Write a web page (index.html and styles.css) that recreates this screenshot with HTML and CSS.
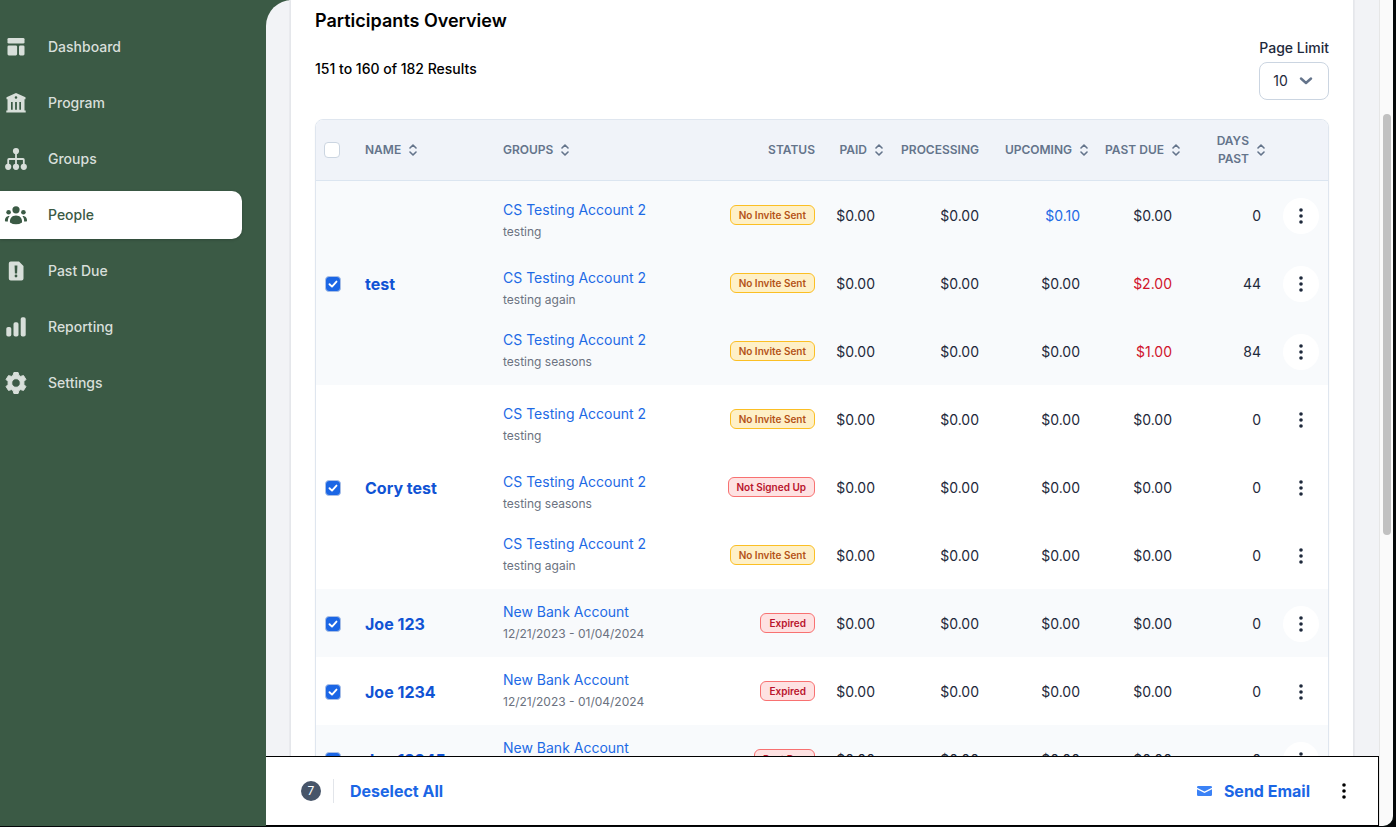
FILE: index.html
```html
<!DOCTYPE html>
<html lang="en">
<head>
<meta charset="utf-8">
<title>Participants Overview</title>
<link rel="stylesheet" href="styles.css">
</head>
<body>
<svg class="sprite" aria-hidden="true">
  <symbol id="sort" viewBox="0 0 8 12"><path d="M1 4 4 1l3 3M1 8l3 3 3-3" fill="none" stroke="currentColor" stroke-width="1.6" stroke-linecap="round" stroke-linejoin="round"/></symbol>
  <symbol id="dots" viewBox="0 0 4 16"><circle cx="2" cy="2" r="1.8"/><circle cx="2" cy="8" r="1.8"/><circle cx="2" cy="14" r="1.8"/></symbol>
</svg>
<div class="app">
  <nav class="sidebar" aria-label="Main">
    <a class="nav-item" href="#"><svg viewBox="0 0 24 24"><rect x="3.5" y="3" width="17" height="5.6" rx="1.3"/><rect x="3.5" y="10.4" width="9.6" height="10" rx="1.3"/><rect x="15" y="10.4" width="5.5" height="10" rx="1.3"/></svg>Dashboard</a>
    <a class="nav-item" href="#"><svg viewBox="0 0 24 24"><path fill-rule="evenodd" d="M12 2 21.5 6.3v1.9h-1V19.6h1.2V21.5H2.3v-1.9h1.2V8.2h-1V6.3zM12 5.2a1.3 1.3 0 1 0 0 2.6 1.3 1.3 0 0 0 0-2.6M7 11v7.8h1.7V11zm4.1 0v7.8h1.8V11zm4.2 0v7.8H17V11z"/></svg>Program</a>
    <a class="nav-item" href="#"><svg viewBox="0 0 24 24"><circle cx="12" cy="4" r="3.1"/><circle cx="4.2" cy="19.8" r="3.1"/><circle cx="12" cy="19.8" r="3.1"/><circle cx="19.8" cy="19.8" r="3.1"/><path d="M12 6v12M4.2 17v-4.2q0-.8.8-.8h14q.8 0 .8.8V17" fill="none" stroke="currentColor" stroke-width="1.8"/></svg>Groups</a>
    <a class="nav-item active" href="#" aria-current="page"><svg viewBox="0 0 24 24"><circle cx="12" cy="6.8" r="3.6"/><circle cx="4.6" cy="9.2" r="2.3"/><circle cx="19.4" cy="9.2" r="2.3"/><path d="M6 19.4c-.5-4.200 2-7 6-7s6.500 2.800 6 7q-2.600 1.900-6 1.900t-6-1.900M1 18.200c-.2-3.100 1.200-5.300 4.600-5.200-1.300 1.500-1.800 3.200-1.700 5.500q-1.600.2-2.900-.3M23 18.200c.2-3.100-1.200-5.300-4.600-5.200 1.300 1.500 1.800 3.200 1.700 5.500q1.600.2 2.900-.3"/></svg>People</a>
    <a class="nav-item" href="#"><svg viewBox="0 0 24 24"><path fill-rule="evenodd" d="M6.800 2.500H15L19.500 7v12.500a2 2 0 0 1-2 2H6.800a2 2 0 0 1-2-2v-15a2 2 0 0 1 2-2M10.600 6.500l.3 8h2.200l.3-8zM12 15.600a1.400 1.400 0 1 0 0 2.800 1.400 1.400 0 0 0 0-2.800"/></svg>Past Due</a>
    <a class="nav-item" href="#"><svg viewBox="0 0 24 24"><rect x="2.300" y="12" width="5" height="9.500" rx="1.800"/><rect x="9.500" y="7.200" width="5" height="14.300" rx="1.800"/><rect x="16.700" y="2.300" width="5" height="19.200" rx="1.800"/></svg>Reporting</a>
    <a class="nav-item" href="#"><svg viewBox="0 0 24 24"><path fill-rule="evenodd" d="M9.900 1.500h4.200l.8 2.900 1.700 1 2.900-.8 2.400 3.800-2 2.200v2.800l2 2.200-2.400 3.800-2.900-.8-1.700 1-.8 2.900H9.900l-.8-2.900-1.700-1-2.900.8-2.400-3.800 2-2.200v-2.800l-2-2.200 2.400-3.800 2.900.8 1.700-1zM12 7.700a4.300 4.300 0 1 0 0 8.600 4.300 4.300 0 0 0 0-8.600" stroke="currentColor" stroke-width="1" stroke-linejoin="round"/></svg>Settings</a>
  </nav>

  <div class="content">
    <main class="page">
      <section class="card">
        <h2>Participants Overview</h2>
        <div class="toolbar">
          <p>151 to 160 of 182 Results</p>
          <div class="limit">
            <label for="limit">Page Limit</label>
            <div class="select">
              <select id="limit"><option>10</option><option>25</option><option>50</option></select>
              <svg viewBox="0 0 14 8"><path d="M2 1.500 7 6l5-4.500" fill="none" stroke="currentColor" stroke-width="2.400" stroke-linecap="round" stroke-linejoin="round"/></svg>
            </div>
          </div>
        </div>

        <div class="table-box">
        <table>
          <colgroup><col class="c-check"><col class="c-name"><col><col class="c-status"><col class="c-paid"><col class="c-proc"><col class="c-up"><col class="c-due"><col class="c-days"><col class="c-act"></colgroup>
          <thead>
            <tr>
              <th><input type="checkbox" aria-label="Select all"></th>
              <th><button class="sort">NAME <svg><use href="#sort"/></svg></button></th>
              <th><button class="sort">GROUPS <svg><use href="#sort"/></svg></button></th>
              <th class="status">STATUS</th>
              <th class="num sortable"><button class="sort">PAID <svg><use href="#sort"/></svg></button></th>
              <th class="num">PROCESSING</th>
              <th class="num sortable"><button class="sort">UPCOMING <svg><use href="#sort"/></svg></button></th>
              <th class="num sortable"><button class="sort">PAST DUE <svg><use href="#sort"/></svg></button></th>
              <th class="num days"><button class="sort"><span>DAYS<br>PAST</span> <svg><use href="#sort"/></svg></button></th>
              <th></th>
            </tr>
          </thead>
          <tbody>
            <tr>
              <td rowspan="3"><input type="checkbox" checked aria-label="Select test"></td>
              <td rowspan="3"><a class="name" href="#">test</a></td>
              <td class="group"><a href="#">CS Testing Account 2</a><small>testing</small></td>
              <td class="status"><span class="badge warn">No Invite Sent</span></td>
              <td class="num">$0.00</td><td class="num">$0.00</td><td class="num blue">$0.10</td><td class="num">$0.00</td><td class="num">0</td>
              <td class="act"><button class="kebab" aria-label="Actions"><svg><use href="#dots"/></svg></button></td>
            </tr>
            <tr>
              <td class="group"><a href="#">CS Testing Account 2</a><small>testing again</small></td>
              <td class="status"><span class="badge warn">No Invite Sent</span></td>
              <td class="num">$0.00</td><td class="num">$0.00</td><td class="num">$0.00</td><td class="num red">$2.00</td><td class="num">44</td>
              <td class="act"><button class="kebab" aria-label="Actions"><svg><use href="#dots"/></svg></button></td>
            </tr>
            <tr>
              <td class="group"><a href="#">CS Testing Account 2</a><small>testing seasons</small></td>
              <td class="status"><span class="badge warn">No Invite Sent</span></td>
              <td class="num">$0.00</td><td class="num">$0.00</td><td class="num">$0.00</td><td class="num red">$1.00</td><td class="num">84</td>
              <td class="act"><button class="kebab" aria-label="Actions"><svg><use href="#dots"/></svg></button></td>
            </tr>
          </tbody>
          <tbody>
            <tr>
              <td rowspan="3"><input type="checkbox" checked aria-label="Select Cory test"></td>
              <td rowspan="3"><a class="name" href="#">Cory test</a></td>
              <td class="group"><a href="#">CS Testing Account 2</a><small>testing</small></td>
              <td class="status"><span class="badge warn">No Invite Sent</span></td>
              <td class="num">$0.00</td><td class="num">$0.00</td><td class="num">$0.00</td><td class="num">$0.00</td><td class="num">0</td>
              <td class="act"><button class="kebab" aria-label="Actions"><svg><use href="#dots"/></svg></button></td>
            </tr>
            <tr>
              <td class="group"><a href="#">CS Testing Account 2</a><small>testing seasons</small></td>
              <td class="status"><span class="badge bad">Not Signed Up</span></td>
              <td class="num">$0.00</td><td class="num">$0.00</td><td class="num">$0.00</td><td class="num">$0.00</td><td class="num">0</td>
              <td class="act"><button class="kebab" aria-label="Actions"><svg><use href="#dots"/></svg></button></td>
            </tr>
            <tr>
              <td class="group"><a href="#">CS Testing Account 2</a><small>testing again</small></td>
              <td class="status"><span class="badge warn">No Invite Sent</span></td>
              <td class="num">$0.00</td><td class="num">$0.00</td><td class="num">$0.00</td><td class="num">$0.00</td><td class="num">0</td>
              <td class="act"><button class="kebab" aria-label="Actions"><svg><use href="#dots"/></svg></button></td>
            </tr>
          </tbody>
          <tbody>
            <tr>
              <td><input type="checkbox" checked aria-label="Select Joe 123"></td>
              <td><a class="name" href="#">Joe 123</a></td>
              <td class="group"><a href="#">New Bank Account</a><small>12/21/2023 - 01/04/2024</small></td>
              <td class="status"><span class="badge bad">Expired</span></td>
              <td class="num">$0.00</td><td class="num">$0.00</td><td class="num">$0.00</td><td class="num">$0.00</td><td class="num">0</td>
              <td class="act"><button class="kebab" aria-label="Actions"><svg><use href="#dots"/></svg></button></td>
            </tr>
          </tbody>
          <tbody>
            <tr>
              <td><input type="checkbox" checked aria-label="Select Joe 1234"></td>
              <td><a class="name" href="#">Joe 1234</a></td>
              <td class="group"><a href="#">New Bank Account</a><small>12/21/2023 - 01/04/2024</small></td>
              <td class="status"><span class="badge bad">Expired</span></td>
              <td class="num">$0.00</td><td class="num">$0.00</td><td class="num">$0.00</td><td class="num">$0.00</td><td class="num">0</td>
              <td class="act"><button class="kebab" aria-label="Actions"><svg><use href="#dots"/></svg></button></td>
            </tr>
          </tbody>
          <tbody>
            <tr>
              <td><input type="checkbox" checked aria-label="Select Joe 12345"></td>
              <td><a class="name" href="#">Joe 12345</a></td>
              <td class="group"><a href="#">New Bank Account</a><small>12/21/2023 - 01/04/2024</small></td>
              <td class="status"><span class="badge bad">Past Due</span></td>
              <td class="num">$0.00</td><td class="num">$0.00</td><td class="num">$0.00</td><td class="num">$0.00</td><td class="num">0</td>
              <td class="act"><button class="kebab" aria-label="Actions"><svg><use href="#dots"/></svg></button></td>
            </tr>
          </tbody>
        </table>
        </div>
      </section>
    </main>
    <footer class="bulk">
      <span class="count">7</span>
      <button class="link deselect">Deselect All</button>
      <button class="link send"><svg viewBox="0 0 15 10"><path d="M1.300 0h12.400A1.300 1.300 0 0 1 15 1.300v.5L7.500 5.600 0 1.800v-.5A1.300 1.300 0 0 1 1.300 0M0 3.300l7.500 3.800L15 3.300v5.400A1.300 1.300 0 0 1 13.700 10H1.300A1.300 1.300 0 0 1 0 8.700z"/></svg>Send Email</button>
      <button class="kebab black" aria-label="More actions"><svg><use href="#dots"/></svg></button>
    </footer>
  </div>
  <div class="track" aria-hidden="true"><div class="thumb"></div></div>
</div>
</body>
</html>
```

FILE: styles.css
```css
* { box-sizing: border-box; }
body {
  margin: 0;
  height: 100vh;
  padding: 0 3px 1px 0;
  background: #05080a;
  color: #1e293b;
  font: 14px/20px Inter, "Liberation Sans", sans-serif;
  overflow: hidden;
}
h2, p { margin: 0; }
a { text-decoration: none; }
button { border: 0; padding: 0; background: none; font: inherit; color: inherit; cursor: pointer; }
svg { fill: currentColor; flex: none; }
.sprite { position: absolute; width: 0; height: 0; }

.app {
  display: flex;
  height: 100%;
  background: #3b5a45;
  border-bottom-right-radius: 10px;
  overflow: hidden;
}
.sidebar {
  flex: none;
  width: 266px;
  padding: 23px 24px 0 0;
  display: flex;
  flex-direction: column;
  gap: 8px;
}
.nav-item {
  display: flex;
  align-items: center;
  gap: 20px;
  height: 48px;
  padding-left: 4px;
  border-radius: 0 10px 10px 0;
  color: #d8dfda;
  font-weight: 500;
}
.nav-item svg { width: 24px; height: 24px; }
.nav-item.active { background: #fff; color: #3b5a45; box-shadow: 0 1px 3px rgba(0, 0, 0, .2); }

.content { flex: 1; min-width: 0; display: flex; flex-direction: column; }
.page {
  flex: 1;
  min-height: 0;
  overflow: hidden;
  padding: 0 25px 0 24px;
  background: #f2f3f6;
  border-top-left-radius: 26px;
}
.card {
  padding: 7px 24px 24px;
  background: #fff;
  border: solid #e5e7eb;
  border-width: 0 1px;
  box-shadow: 0 0 0 1px #e9eaee;
}
h2 { font-size: 18px; line-height: 28px; font-weight: 600; color: #000; }
.toolbar {
  display: flex;
  justify-content: space-between;
  align-items: center;
  margin: 3px 0 19px;
}
.toolbar p { color: #000; font-weight: 500; }
.limit { display: flex; flex-direction: column; gap: 4px; }
.limit label { font-weight: 500; }
.select { position: relative; color: #64748b; }
.select select {
  appearance: none;
  display: block;
  width: 100%;
  height: 38px;
  padding: 0 28px 0 13px;
  border: 1px solid #cbd5e1;
  border-radius: 8px;
  background: #fff;
  color: #1e293b;
  font: inherit;
}
.select svg { position: absolute; right: 16px; top: 15px; width: 14px; height: 8px; pointer-events: none; }

.table-box { border: 1px solid #dfe6ef; border-radius: 8px; overflow: hidden; box-shadow: 0 1px 2px rgba(0, 0, 0, .05); }
table { width: 100%; table-layout: fixed; border-collapse: separate; border-spacing: 0; }
.c-check { width: 49px; }
.c-name { width: 138px; }
.c-status { width: 100px; }
.c-paid { width: 72px; }
.c-proc { width: 104px; }
.c-up { width: 101px; }
.c-due { width: 92px; }
.c-days { width: 89px; }
.c-act { width: 55px; }

th, td { padding: 0; text-align: left; vertical-align: middle; white-space: nowrap; }
th {
  height: 61px;
  background: #f0f3f9;
  border-bottom: 1px solid #dbe5f0;
  color: #64748b;
  font-size: 12px;
  line-height: 18px;
  font-weight: 600;
}
th:first-child { padding-left: 8px; }
td { height: 68px; padding-top: 2px; }
td:first-child:has(input) { padding-left: 9px; }
tbody:nth-of-type(odd) { background: #f8fafc; }
tbody:nth-of-type(even) { background: #fff; }
.status { text-align: right; }
td.status { padding: 0 0 2px; }
.num { text-align: right; padding-right: 12px; }
.num.sortable { padding-right: 4px; }
.num.days { padding-right: 8px; }
.sort { display: inline-flex; align-items: center; gap: 8px; text-align: right; vertical-align: middle; }
.sort svg { width: 8px; height: 12px; }
td.group { padding: 0 0 1px; }
tr:not(:last-child) td.group { padding-top: 12px; }
.group a, .group small { display: block; }
.group a { color: #1d6ae5; margin-bottom: 2px; }
.group small { color: #6b7280; font-size: 12px; }
.name { color: #1053d4; font-size: 16px; line-height: 24px; font-weight: 700; }
.blue { color: #1d6ae5; }
.red { color: #d0142c; }
.badge {
  display: inline-block;
  padding: 0 8px;
  border: 1px solid;
  border-radius: 6px;
  font-size: 10px;
  line-height: 18px;
  font-weight: 600;
  vertical-align: middle;
}
.warn { background: #fef0c7; border-color: #fbbf24; color: #b45317; }
.bad { background: #fee2e2; border-color: #f87171; color: #b9142c; }
td.act { text-align: center; }
.kebab {
  display: inline-grid;
  place-items: center;
  width: 36px;
  height: 36px;
  border-radius: 50%;
  background: #fff;
  vertical-align: middle;
}
.kebab svg { width: 4px; height: 16px; }
.black { color: #000; }

input[type="checkbox"] {
  appearance: none;
  display: block;
  width: 16px;
  height: 16px;
  margin: 0;
  border: 1px solid #cbd5e1;
  border-radius: 4px;
  background: #fff;
}
input[type="checkbox"]:checked {
  border-color: #a9bfe6;
  background: #1b66e5 url("data:image/svg+xml,%3Csvg xmlns='http://www.w3.org/2000/svg' viewBox='0 0 14 14'%3E%3Cpath d='M3.500 7.200 6 9.600l4.500-5' fill='none' stroke='white' stroke-width='1.900' stroke-linecap='round' stroke-linejoin='round'/%3E%3C/svg%3E") center / 14px 14px no-repeat;
}

.bulk {
  flex: none;
  display: flex;
  align-items: center;
  height: 70px;
  padding: 0 16px 0 35px;
  background: #fff;
  border: 1px solid #000;
  border-left: 0;
}
.count {
  width: 20px;
  height: 20px;
  border-radius: 50%;
  background: #475569;
  color: #fff;
  font-size: 12px;
  text-align: center;
}
.link { color: #1b66e5; font-size: 16px; line-height: 24px; font-weight: 700; }
.deselect { margin-left: 12px; padding-left: 16px; border-left: 1px solid #e2e5ea; }
.send { display: flex; align-items: center; gap: 12px; margin-left: auto; margin-right: 16px; }
.send svg { width: 15px; height: 10px; color: #3b82f6; }

.track { position: relative; flex: none; width: 14px; background: #fafafa; border-left: 1px solid #e6e6e6; }
.thumb { position: absolute; left: 3px; top: 13.8%; width: 8px; height: 51%; border-radius: 4px; background: #c1c1c1; }
```
